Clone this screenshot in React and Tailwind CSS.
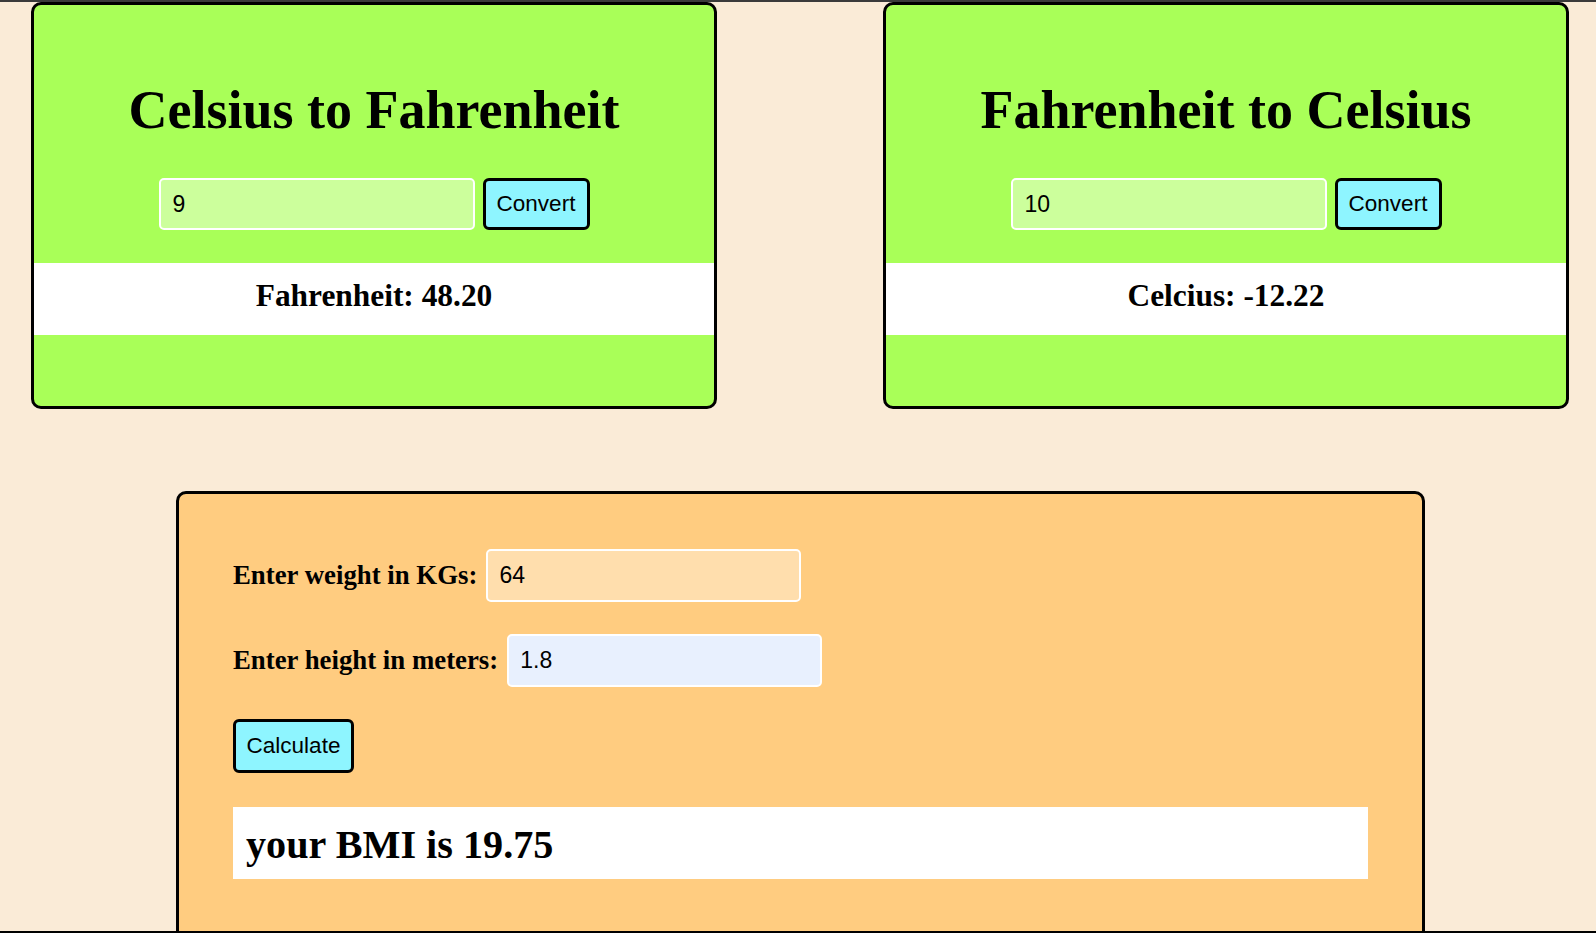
import React from "react";

const serif = { fontFamily: '"Liberation Serif", "Times New Roman", serif' };

function Converter({ title, value, result }) {
  return (
    <div className="w-[686px] h-[407px] shrink-0 border-[3px] border-black rounded-[10px] bg-[#a9ff58] flex flex-col items-center overflow-hidden">
      <h1
        className="mt-[74px] text-[54px] leading-[62px] font-bold text-black text-center"
        style={serif}
      >
        {title}
      </h1>
      <div className="mt-[37px] flex items-center gap-[8px] font-['Liberation_Sans',Arial,sans-serif]">
        <input
          defaultValue={value}
          className="w-[316px] h-[52px] border-2 border-white rounded-[5px] bg-[#ccff9c] px-[12px] text-[23px] text-black outline-none"
        />
        <button className="w-[107px] h-[52px] border-[3px] border-black rounded-[6px] bg-[#8ef5ff] text-[22.5px] text-black">
          Convert
        </button>
      </div>
      <div className="mt-[33px] w-full h-[72px] bg-white flex items-center justify-center pb-[6px]">
        <h3 className="text-[31.4px] leading-[36px] font-bold text-black" style={serif}>
          {result}
        </h3>
      </div>
    </div>
  );
}

export default function App() {
  return (
    <div className="h-[933px] overflow-hidden bg-[#faebd7] border-t-2 border-t-[#3a3a3a] border-b-2 border-b-black box-border">
      <div className="flex pl-[31px] gap-[166px]">
        <Converter title="Celsius to Fahrenheit" value="9" result="Fahrenheit: 48.20" />
        <Converter title="Fahrenheit to Celsius" value="10" result="Celcius: -12.22" />
      </div>
      <div className="mt-[82px] ml-[176px] w-[1249px] h-[600px] border-[3px] border-black rounded-[10px] bg-[#ffcc80] px-[54px] pt-[55px]">
        <div className="flex items-center h-[53px]">
          <label className="text-[26.8px] font-bold text-black leading-[31px]" style={serif}>
            Enter weight in KGs:
          </label>
          <input
            defaultValue="64"
            className="ml-[9px] w-[315px] h-[53px] border-2 border-white rounded-[5px] bg-[#ffdead] px-[11px] text-[23px] text-black outline-none font-['Liberation_Sans',Arial,sans-serif]"
          />
        </div>
        <div className="mt-[32px] flex items-center h-[53px]">
          <label className="text-[26.8px] font-bold text-black leading-[31px]" style={serif}>
            Enter height in meters:
          </label>
          <input
            defaultValue="1.8"
            className="ml-[9px] w-[315px] h-[53px] border-2 border-white rounded-[5px] bg-[#e8f0fe] px-[11px] text-[23px] text-black outline-none font-['Liberation_Sans',Arial,sans-serif]"
          />
        </div>
        <button className="mt-[32px] w-[121px] h-[54px] border-[3px] border-black rounded-[6px] bg-[#8ef5ff] text-[22.5px] text-black font-['Liberation_Sans',Arial,sans-serif] block">
          Calculate
        </button>
        <div className="mt-[34px] h-[72px] bg-white flex items-center pl-[13px] pt-[3px]">
          <h2 className="text-[40.2px] leading-[46px] font-bold text-black" style={serif}>
            your BMI is 19.75
          </h2>
        </div>
      </div>
    </div>
  );
}
